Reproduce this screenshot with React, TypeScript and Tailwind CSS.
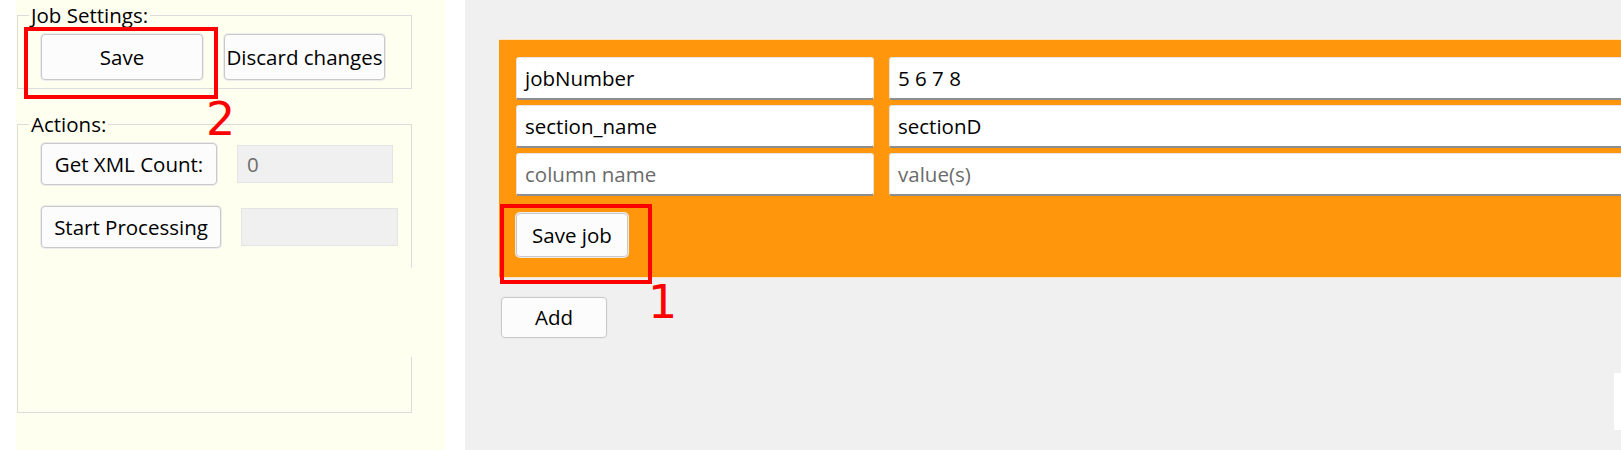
import React from "react";

const font = { fontFamily: '"Open Sans", "Noto Sans", sans-serif' };

function Btn({ w, h, children }: { w: string; h: string; children: React.ReactNode }) {
  return (
    <button
      className={`${w} ${h} shrink-0 rounded-[4px] border border-[#c9c9c9] bg-[#fcfcfc] text-[20.5px] text-black shadow-[0_0_0_1px_#ececec] flex items-center justify-center whitespace-nowrap`}
    >
      {children}
    </button>
  );
}

function Field({ w, value, placeholder }: { w: string; value?: string; placeholder?: string }) {
  return (
    <div
      className={`${w} h-[43px] shrink-0 rounded-[3px] bg-white border border-[#e4e4e4] border-b-2 border-b-[#8e8e8e] flex items-center pl-[8px] text-[20.5px]`}
    >
      {value ? <span className="text-black">{value}</span> : <span className="text-[#6b6b6b]">{placeholder}</span>}
    </div>
  );
}

export default function App() {
  return (
    <div className="relative flex h-[450px] w-[1621px] overflow-hidden bg-white" style={font}>
      {/* left panel */}
      <div className="ml-[16px] w-[429px] shrink-0 bg-[#fffff0] pl-[1px] pt-[3px]">
        <fieldset className="w-[395px] border border-[#dcdcdc] pb-[8px]">
          <legend className="ml-[11px] px-[2px] text-[20.5px] leading-[24px] text-black">Job Settings:</legend>
          <div className="mt-[7px] flex gap-[21px] pl-[23px]">
            <Btn w="w-[162px]" h="h-[46px]">Save</Btn>
            <Btn w="w-[161px]" h="h-[46px]">Discard changes</Btn>
          </div>
        </fieldset>
        <fieldset className="relative mt-[23px] h-[301px] w-[395px] border border-[#dcdcdc]">
          <legend className="ml-[11px] px-[2px] text-[20.5px] leading-[24px] text-black">Actions:</legend>
          <div className="mt-[7px] flex flex-col gap-[21px] pl-[23px]">
            <div className="flex items-center gap-[20px]">
              <Btn w="w-[176px]" h="h-[42px]">Get XML Count:</Btn>
              <div className="flex h-[38px] w-[156px] items-center border border-[#e4e4e4] bg-[#f0f0f0] pl-[9px] text-[20.5px] text-[#6d6d6d]">
                0
              </div>
            </div>
            <div className="flex items-center gap-[20px]">
              <Btn w="w-[180px]" h="h-[42px]">Start Processing</Btn>
              <div className="h-[38px] w-[157px] border border-[#e4e4e4] bg-[#f0f0f0]" />
            </div>
          </div>
          <div className="absolute right-[-2px] top-[132px] h-[89px] w-[3px] bg-[#fffff0]" />
        </fieldset>
      </div>

      {/* main area */}
      <div className="ml-[20px] flex-1 bg-[#f0f0f0] pl-[34px] pt-[39px]">
        <div className="w-[1200px] border-t border-b border-[#fbe3c0] bg-[#ff960c] pl-[17px] pr-0 pt-[17px] pb-[20px]">
          <div className="flex flex-col gap-[5px]">
            <div className="flex gap-[15px]">
              <Field w="w-[358px]" value="jobNumber" />
              <Field w="flex-1" value="5 6 7 8" />
            </div>
            <div className="flex gap-[15px]">
              <Field w="w-[358px]" value="section_name" />
              <Field w="flex-1" value="sectionD" />
            </div>
            <div className="flex gap-[15px]">
              <Field w="w-[358px]" placeholder="column name" />
              <Field w="flex-1" placeholder="value(s)" />
            </div>
          </div>
          <div className="mt-[17px]">
            <Btn w="w-[112px]" h="h-[44px]">Save job</Btn>
          </div>
        </div>
        <div className="ml-[2px] mt-[19px]">
          <Btn w="w-[106px]" h="h-[41px]">Add</Btn>
        </div>
      </div>

      {/* annotations */}
      <div className="absolute left-[24px] top-[27px] h-[72px] w-[194px] border-4 border-[#ff0000]" />
      <div
        className="absolute left-[206px] top-[96px] text-[46px] leading-none text-[#ff0000]"
        style={{ fontFamily: '"DejaVu Sans", sans-serif' }}
      >
        2
      </div>
      <div className="absolute left-[500px] top-[204px] h-[80px] w-[152px] border-4 border-[#ff0000]" />
      <div
        className="absolute left-[648px] top-[279px] text-[46px] leading-none text-[#ff0000]"
        style={{ fontFamily: '"DejaVu Sans", sans-serif' }}
      >
        1
      </div>
      <div className="absolute left-[1614px] top-[373px] h-[57px] w-[7px] bg-white" />
    </div>
  );
}
